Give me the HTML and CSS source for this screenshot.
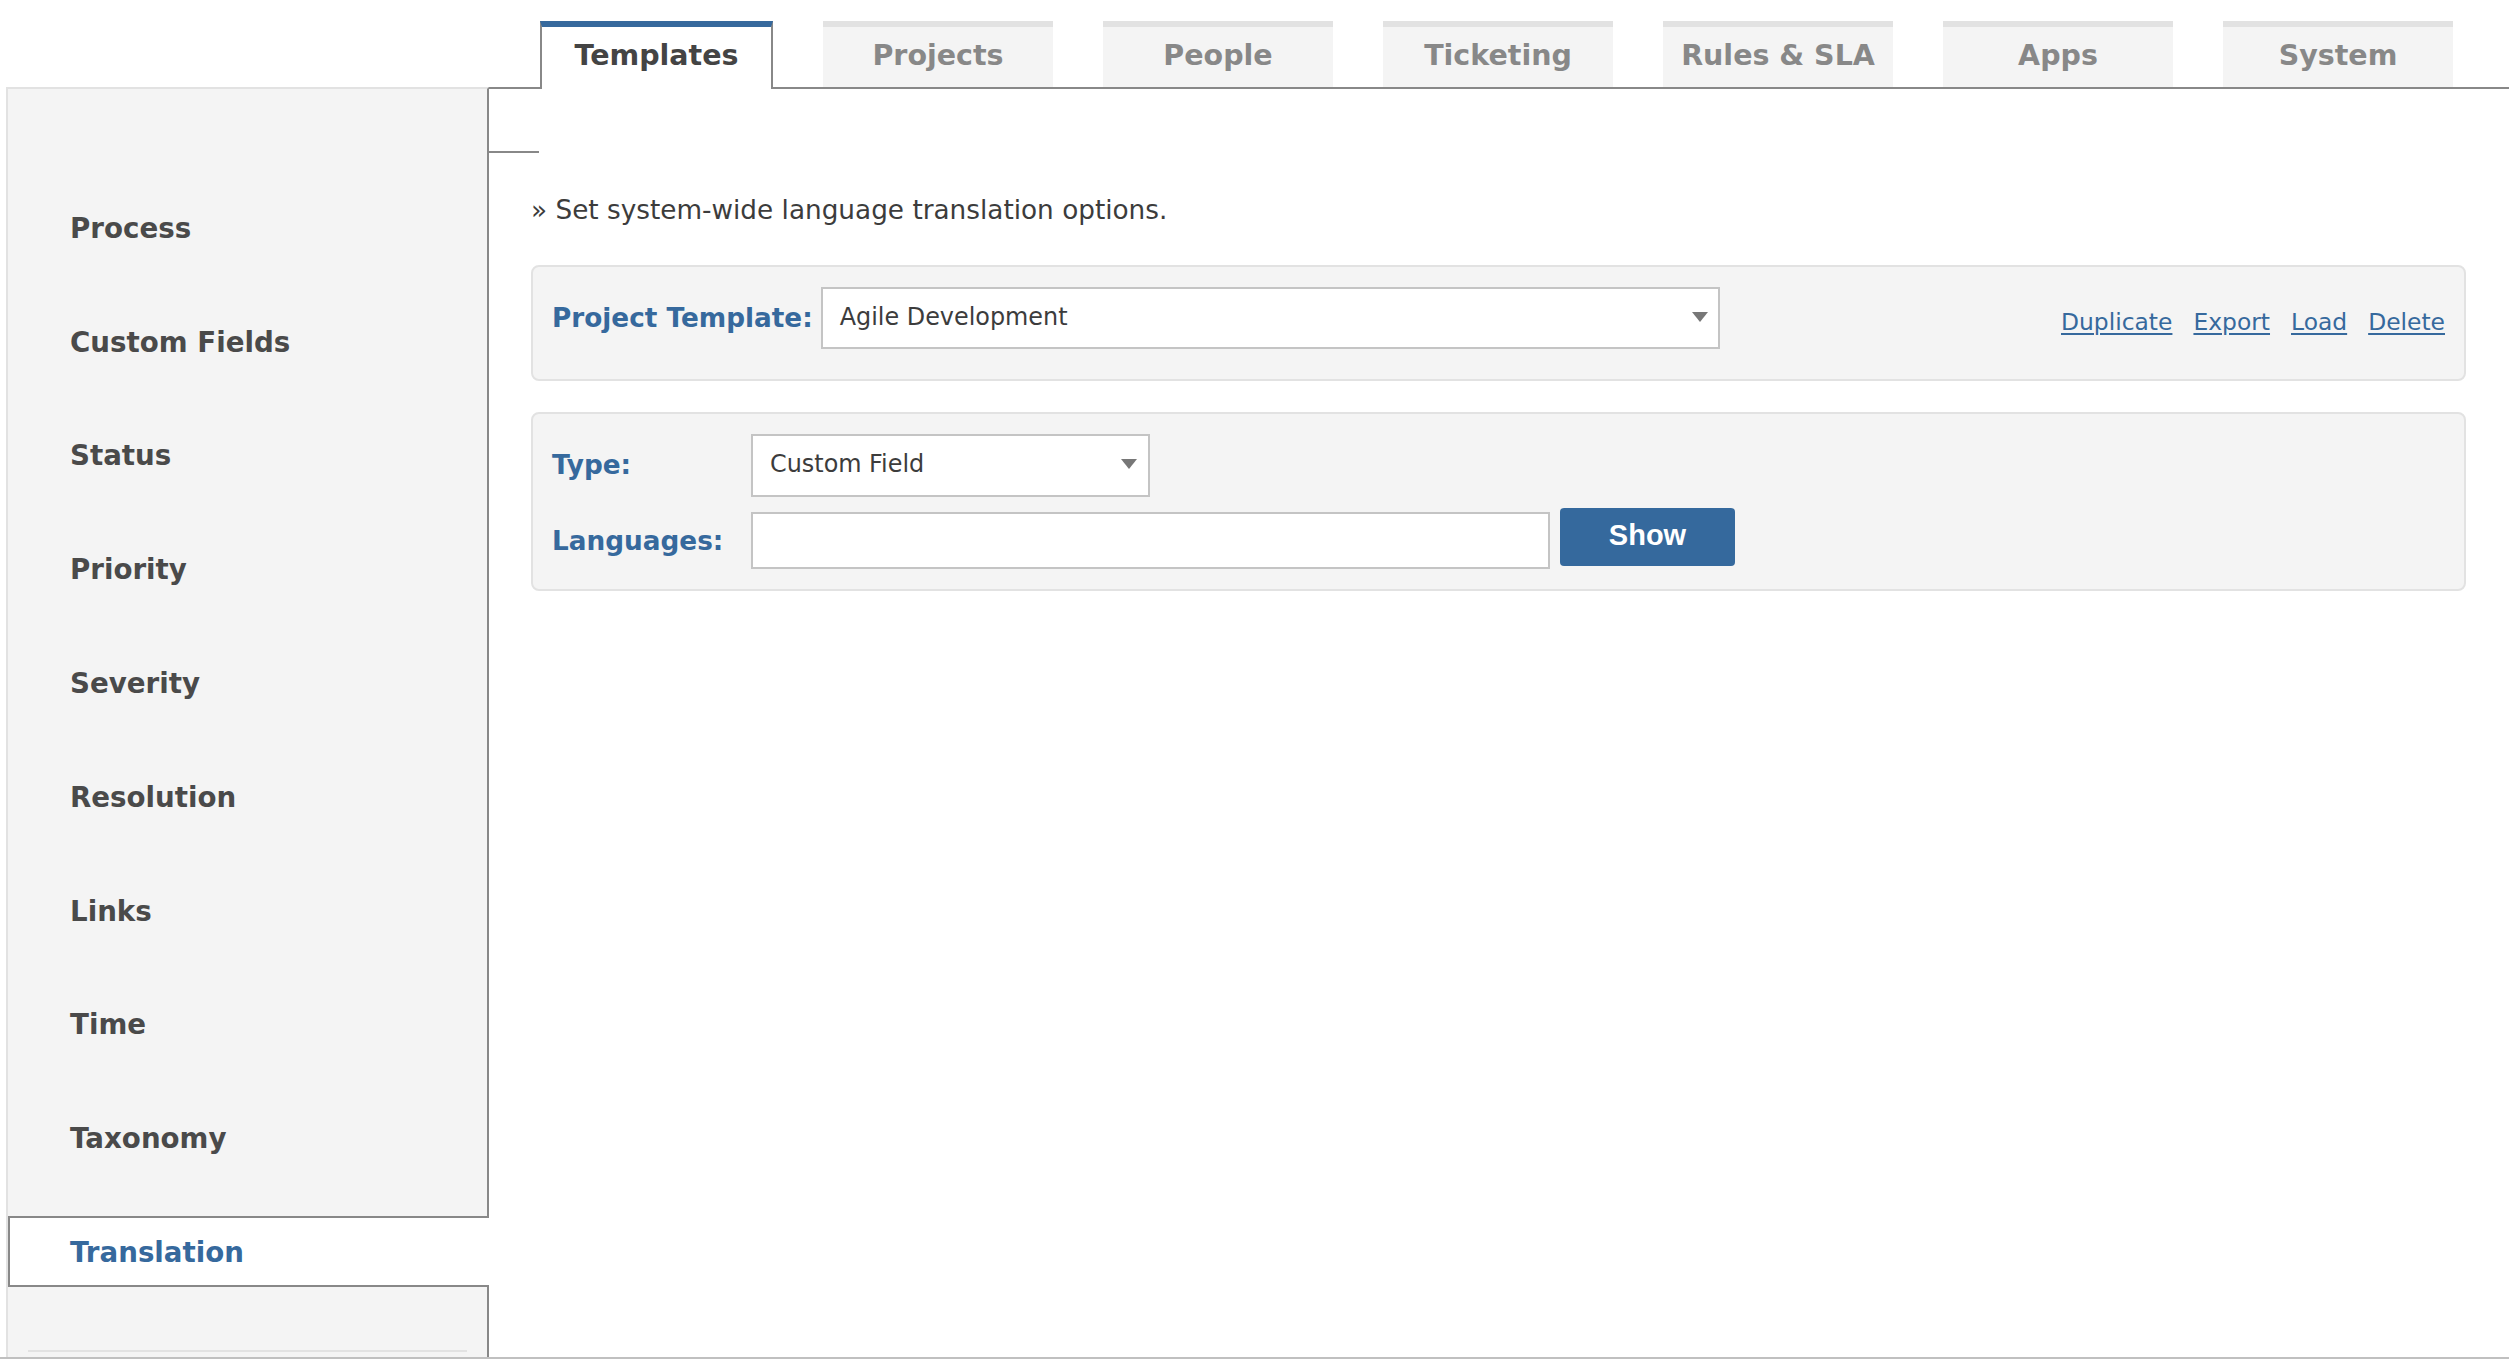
FILE: index.html
```html
<!DOCTYPE html>
<html lang="en">
<head>
<meta charset="utf-8">
<title>Templates - Translation</title>
<link rel="stylesheet" href="styles.css">
</head>
<body>
<div class="page">
  <header class="header">
    <nav class="tabs">
      <div class="tab active">Templates</div>
      <div class="tab">Projects</div>
      <div class="tab">People</div>
      <div class="tab">Ticketing</div>
      <div class="tab">Rules &amp; SLA</div>
      <div class="tab">Apps</div>
      <div class="tab">System</div>
    </nav>
  </header>
  <div class="main">
    <aside class="sidebar">
      <ul class="side-list">
        <li class="side-item">Process</li>
        <li class="side-item">Custom Fields</li>
        <li class="side-item">Status</li>
        <li class="side-item">Priority</li>
        <li class="side-item">Severity</li>
        <li class="side-item">Resolution</li>
        <li class="side-item">Links</li>
        <li class="side-item">Time</li>
        <li class="side-item">Taxonomy</li>
        <li class="side-item selected">Translation</li>
      </ul>
      <div class="side-sep"></div>
    </aside>
    <section class="content">
      <div class="tab-gap"></div>
      <div class="content-body">
        <p class="intro">» Set system-wide language translation options.</p>
        <div class="panel panel-template">
          <span class="label">Project Template:</span>
          <div class="select select-wide">
            <span class="select-text">Agile Development</span>
            <svg class="caret" width="16" height="10" viewBox="0 0 16 10"><path d="M0 0 H16 L8 10 Z" fill="#777"/></svg>
          </div>
          <div class="actions">
            <a href="#" class="action">Duplicate</a>
            <a href="#" class="action">Export</a>
            <a href="#" class="action">Load</a>
            <a href="#" class="action">Delete</a>
          </div>
        </div>
        <div class="panel panel-form">
          <span class="label">Type:</span>
          <div class="select select-type">
            <span class="select-text">Custom Field</span>
            <svg class="caret" width="16" height="10" viewBox="0 0 16 10"><path d="M0 0 H16 L8 10 Z" fill="#777"/></svg>
          </div>
          <span class="label label-lang">Languages:</span>
          <div class="field-row">
            <input class="text-input" type="text" value="">
            <button class="btn" type="button">Show</button>
          </div>
        </div>
      </div>
    </section>
  </div>
  <footer class="footer"></footer>
</div>
</body>
</html>
```

FILE: styles.css
```css
* { box-sizing: border-box; }

html, body {
  margin: 0;
  padding: 0;
  background: #fff;
}

body {
  font-family: "DejaVu Sans", Verdana, sans-serif;
  color: #3c3c3c;
  width: 2509px;
  height: 1359px;
  overflow: hidden;
}

.page {
  display: flex;
  flex-direction: column;
  height: 1359px;
}

/* ---------- Tabs ---------- */
.header {
  height: 87px;
  padding-left: 540px;
  display: flex;
  align-items: flex-end;
}

.tabs {
  display: flex;
  align-items: flex-end;
  gap: 50px;
}

.tab {
  width: 230px;
  height: 66px;
  border-top: 6px solid #e2e2e2;
  background: #f4f4f4;
  color: #888;
  font-weight: bold;
  font-size: 28.5px;
  text-align: center;
  line-height: 58px;
  padding-bottom: 2px;
}

.tab.active {
  width: 233px;
  height: 68px;
  margin-bottom: -2px;
  position: relative;
  z-index: 2;
  background: #fff;
  color: #444;
  border-top: 6px solid #36699d;
  border-left: 2px solid #888;
  border-right: 2px solid #888;
  padding-bottom: 4px;
}

/* ---------- Main ---------- */
.main {
  flex: 1;
  display: flex;
  min-height: 0;
}

.sidebar {
  margin-left: 6px;
  width: 483px;
  background: #f4f4f4;
  border-top: 2px solid #e2e2e2;
  border-left: 2px solid #e2e2e2;
  border-right: 2px solid #888;
  padding-top: 102.8px;
  display: flex;
  flex-direction: column;
}

.side-list {
  list-style: none;
  margin: 0;
  padding: 0;
  display: flex;
  flex-direction: column;
  gap: 42.8px;
}

.side-item {
  height: 71px;
  border: 2px solid transparent;
  border-right: none;
  padding-left: 60px;
  padding-top: 3px;
  line-height: 64px;
  font-size: 27.7px;
  font-weight: bold;
  color: #4a4a4a;
}

.side-item.selected {
  background: #fff;
  border-color: #888;
  margin-right: -2px;
  color: #36699d;
  position: relative;
  z-index: 1;
}

.side-sep {
  margin: 63px 20px 0 20px;
  height: 2px;
  background: #e2e2e2;
}

/* ---------- Content ---------- */
.content {
  flex: 1;
  border-top: 2px solid #888;
  min-width: 0;
}

.tab-gap {
  width: 50px;
  height: 64px;
  border-bottom: 2px solid #888;
}

.content-body {
  padding: 0 43px 0 42px;
}

.intro {
  margin: 38.6px 0 0 0;
  font-size: 26.3px;
  line-height: 36px;
  color: #3c3c3c;
}

.panel {
  background: #f4f4f4;
  border: 2px solid #e2e2e2;
  border-radius: 8px;
}

.panel-template {
  margin-top: 37px;
  display: flex;
  align-items: center;
  padding: 20px 19px 30px 19px;
}

.label {
  font-size: 26.3px;
  font-weight: bold;
  color: #36699d;
  white-space: nowrap;
}

.select {
  background: #fff;
  border: 2px solid #c4c4c4;
  display: flex;
  align-items: center;
  justify-content: space-between;
  padding: 0 10px 0 17px;
  font-size: 23.9px;
  color: #3c3c3c;
}

.select-wide {
  width: 899px;
  height: 62px;
  margin-left: 8px;
}

.select-type {
  width: 399px;
  height: 63px;
  padding-right: 11px;
}

.select-text {
  padding-bottom: 2px;
}

.caret {
  display: block;
  margin-top: -2px;
}

.actions {
  margin-left: auto;
  display: flex;
  gap: 21px;
  padding-top: 8px;
}

.action {
  color: #36699d;
  font-size: 23.4px;
  text-decoration: underline;
  text-underline-offset: 3px;
}

.panel-form {
  margin-top: 31px;
  display: grid;
  grid-template-columns: 199px 1fr;
  row-gap: 11px;
  align-items: center;
  padding: 20px 19px 20px 19px;
}

.label-lang {
  padding-top: 5px;
}

.field-row {
  display: flex;
  align-items: flex-start;
}

.text-input {
  width: 799px;
  height: 57px;
  margin: 4px 0 0 0;
  border: 2px solid #c4c4c4;
  background: #fff;
  font-family: inherit;
  font-size: 22px;
  padding: 0 10px;
  outline: none;
}

.btn {
  width: 175px;
  height: 58px;
  margin-left: 10px;
  border: none;
  border-radius: 4px;
  background: #35699d;
  color: #fff;
  font-family: "Liberation Sans", Arial, sans-serif;
  font-weight: bold;
  font-size: 29px;
  padding: 0 0 2px 0;
}

/* ---------- Footer ---------- */
.footer {
  height: 2px;
  background: #c0c0c0;
}
```
